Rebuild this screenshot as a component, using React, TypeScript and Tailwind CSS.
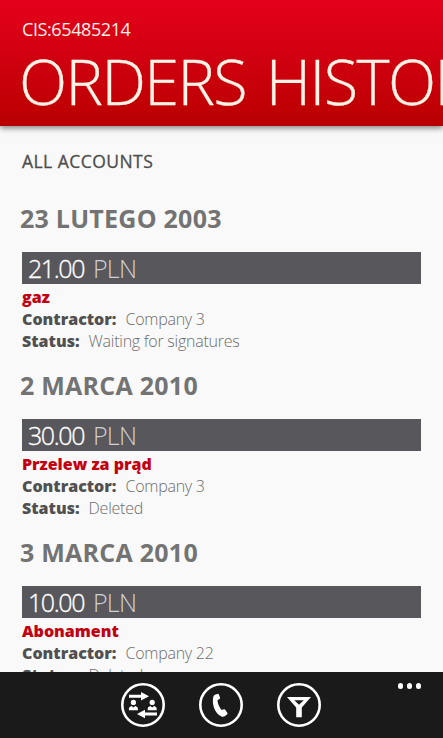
const ORDERS = [
  { date: '23 LUTEGO 2003', amount: '21.00', title: 'gaz', contractor: 'Company 3', status: 'Waiting for signatures' },
  { date: '2 MARCA 2010', amount: '30.00', title: 'Przelew za prąd', contractor: 'Company 3', status: 'Deleted' },
  { date: '3 MARCA 2010', amount: '10.00', title: 'Abonament', contractor: 'Company 22', status: 'Deleted' }
];

type Order = (typeof ORDERS)[number];

function OrderItem({ order }: { order: Order }) {
  return (
    <section className="h-[167px] whitespace-nowrap">
      <h2 className="-ml-0.5 h-9 text-[25px] leading-9 font-bold tracking-[0.25px] text-[#737373]">{order.date}</h2>
      <div className="mt-4 flex h-8 items-center gap-[9px] bg-[#58575c] pl-1.5 text-[25px] leading-8 font-light tracking-[-1.4px]">
        <span className="text-white [-webkit-text-stroke:0.35px_white]">{order.amount}</span>
        <span className="tracking-[-0.8px] text-[#d0d0d4]">PLN</span>
      </div>
      <div className="mt-0.5 text-base leading-[22px] tracking-[-0.25px]">
        <p className="font-extrabold tracking-normal text-[#c20010]">{order.title}</p>
        <p className="flex gap-[9px]">
          <span className="font-extrabold tracking-normal text-[#505050]">Contractor:</span>
          <span className="font-light text-[#6d6d6d]">{order.contractor}</span>
        </p>
        <p className="flex gap-[9px]">
          <span className="font-extrabold tracking-normal text-[#505050]">Status:</span>
          <span className="font-light text-[#6d6d6d]">{order.status}</span>
        </p>
      </div>
    </section>
  );
}

function AccountsIcon() {
  return (
    <svg viewBox="0 0 44 44" className="size-11" fill="#fff">
      <circle cx="22" cy="22" r="20.7" fill="none" stroke="#fff" strokeWidth="2.6" />
      <path d="M8 11.7h12V9l8 4.2-8 4.200v-2.700H8z" />
      <path d="M36 29.500H24v-2.700L16 31l8 4.200v-2.700h12z" />
      <circle cx="12.4" cy="19.400" r="2.600" />
      <path d="M7.900 27.300v-1.700q0-2 2.700-2.600l1.800 1.400 1.800-1.400q2.700.6 2.700 2.600v1.700z" />
      <circle cx="31.200" cy="19.400" r="2.600" />
      <path d="M26.700 27.300v-1.700q0-2 2.700-2.600l1.800 1.400 1.800-1.400q2.700.6 2.700 2.600v1.700z" />
    </svg>
  );
}

function PhoneIcon() {
  return (
    <svg viewBox="0 0 44 44" className="size-11" fill="#fff">
      <circle cx="22" cy="22" r="20.7" fill="none" stroke="#fff" strokeWidth="2.6" />
      <path d="M15.800 11.800 18.400 10.900q1-.3 1.500.7l1.100 3q.3 1-.6 1.500l-1.900 1.200q.3 5.200 4.100 9.600l2.300-.6q1-.2 1.500.7l2 3q.5 1-.4 1.600l-2.300 1.700q-1.400.9-3.700-.1C15.300 29.800 12.900 21 14.200 14.200q.3-1.800 1.600-2.400z" />
    </svg>
  );
}

function FilterIcon() {
  return (
    <svg viewBox="0 0 44 44" className="size-11" fill="#fff">
      <circle cx="22" cy="22" r="20.7" fill="none" stroke="#fff" strokeWidth="2.6" />
      <path fillRule="evenodd" d="M10 14h24l-9.200 10.500V34.300h-5.600v-9.800zM17.300 17.200l4.700 4.500 4.700-4.500z" />
    </svg>
  );
}

export default function App() {
  return (
    <div className="flex h-[738px] w-[443px] flex-col overflow-hidden bg-[#f9f9f9] font-['Open_Sans','Noto_Sans',sans-serif]">
      {/* Page header */}
      <header className="relative h-[126px] shrink-0 bg-linear-to-b from-[#e4001b] to-[#b90000] pl-[22px] whitespace-nowrap text-[#fff3e6] shadow-[0_2px_6px_rgba(0,0,0,0.5)]">
        <p className="pt-[17px] text-[18px] leading-6 tracking-[-0.4px]">CIS:65485214</p>
        <h1 className="-ml-[3px] text-[63px] leading-[80px] font-light tracking-[-1.6px] [word-spacing:5px] [-webkit-text-stroke:0.3px_#fff3e6]">ORDERS HISTORY</h1>
      </header>

      <main className="h-[546px] shrink-0 overflow-hidden px-[22px]">
        <p className="mt-[23px] h-6 text-[17.5px] leading-6 tracking-[0.45px] text-[#4d4d4d] [-webkit-text-stroke:0.3px_#4d4d4d]">ALL ACCOUNTS</p>
        <div className="mt-[27px]">
          {ORDERS.map((order) => (
            <OrderItem key={order.date} order={order} />
          ))}
        </div>
      </main>

      {/* Application bar */}
      <footer className="relative flex h-[66px] shrink-0 bg-[#1a1a1a] pt-[11px] pl-[120.5px]">
        <div className="flex gap-[34px]">
          <button aria-label="Accounts" className="size-11"><AccountsIcon /></button>
          <button aria-label="Call" className="size-11"><PhoneIcon /></button>
          <button aria-label="Filter" className="size-11"><FilterIcon /></button>
        </div>
        <button aria-label="More" className="absolute top-[11px] right-[22px] flex gap-[3.5px]">
          <span className="size-[5.5px] rounded-full bg-white" />
          <span className="size-[5.5px] rounded-full bg-white" />
          <span className="size-[5.5px] rounded-full bg-white" />
        </button>
      </footer>
    </div>
  );
}
